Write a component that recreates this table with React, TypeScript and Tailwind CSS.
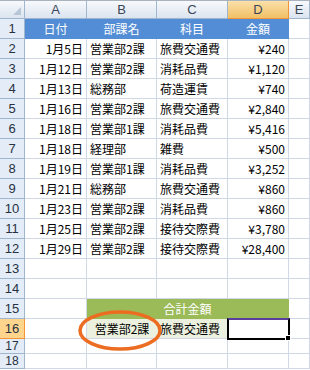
import React from 'react';

type Row = [string, string, string, string];

const rows: Row[] = [
  ['1月5日', '営業部2課', '旅費交通費', '¥240'],
  ['1月12日', '営業部2課', '消耗品費', '¥1,120'],
  ['1月13日', '総務部', '荷造運賃', '¥740'],
  ['1月16日', '営業部2課', '旅費交通費', '¥2,840'],
  ['1月18日', '営業部1課', '消耗品費', '¥5,416'],
  ['1月18日', '経理部', '雑費', '¥500'],
  ['1月19日', '営業部1課', '消耗品費', '¥3,252'],
  ['1月21日', '総務部', '旅費交通費', '¥860'],
  ['1月23日', '営業部2課', '消耗品費', '¥860'],
  ['1月25日', '営業部2課', '接待交際費', '¥3,780'],
  ['1月29日', '営業部2課', '接待交際費', '¥28,400'],
];

const cell = 'border-r border-b border-[#d0d7e5] flex items-end px-[3px] pb-[1px] leading-[16px] whitespace-nowrap overflow-hidden';
const rowHead = "bg-[#e4ecf7] border-r border-b border-[#9eb6ce] flex items-end justify-center pb-[2px] leading-[14px] text-[13px] text-[#27313f] font-['Liberation_Sans',sans-serif]";
const rowHeadSmall = "bg-[#e4ecf7] border-r border-b border-[#9eb6ce] flex items-end justify-center leading-[14px] text-[12px] text-[#27313f] font-['Liberation_Sans',sans-serif]";
const colHead = "bg-gradient-to-b from-[#f7f9fc] to-[#dbe4ef] border-r border-b border-[#9eb6ce] flex items-center justify-center text-[13px] text-[#3b4656] font-['Liberation_Sans',sans-serif]";

const RowHeader: React.FC<{ n: number; active?: boolean; small?: boolean }> = ({ n, active, small }) => {
  if (active) {
    return (
      <div className="bg-[#ffd58d] border-r border-b border-[#f29436] flex items-end justify-center pb-[2px] leading-[14px] text-[13px] text-[#27313f] font-['Liberation_Sans',sans-serif]">
        {n}
      </div>
    );
  }
  return <div className={small ? rowHeadSmall : rowHead}>{n}</div>;
};

const App: React.FC = () => {
  return (
    <div className="w-[310px] h-[370px] overflow-hidden bg-white relative font-['Noto_Sans_CJK_JP',sans-serif] text-[12px] text-black border-t border-[#a9b2bd]">
      <div className="grid grid-cols-[25px_62px_70px_71px_61px_21px] grid-rows-[18px_repeat(16,20px)_15px_15px]">
        {/* column headers */}
        <div className="bg-gradient-to-b from-[#f7f9fc] to-[#dbe4ef] border-r border-b border-[#9eb6ce] relative">
          <div className="absolute right-[3px] bottom-[3px] w-0 h-0 border-l-[8px] border-l-transparent border-b-[8px] border-b-[#b8c6d8]" />
        </div>
        <div className={colHead}>A</div>
        <div className={colHead}>B</div>
        <div className={colHead}>C</div>
        <div className="bg-gradient-to-b from-[#fae0a8] to-[#f2c066] border-r border-b border-[#f29436] flex items-center justify-center text-[13px] text-[#3b4656] font-['Liberation_Sans',sans-serif]">D</div>
        <div className={colHead}>E</div>

        {/* row 1 */}
        <RowHeader n={1} />
        <div className="bg-[#538dd5] border-r border-b border-[#538dd5] flex items-end justify-center pb-[1px] leading-[16px] text-white">日付</div>
        <div className="bg-[#538dd5] border-r border-b border-[#538dd5] flex items-end justify-center pb-[1px] leading-[16px] text-white">部課名</div>
        <div className="bg-[#538dd5] border-r border-b border-[#538dd5] flex items-end justify-center pb-[1px] leading-[16px] text-white">科目</div>
        <div className="bg-[#538dd5] border-r border-b border-[#538dd5] flex items-end justify-center pb-[1px] leading-[16px] text-white">金額</div>
        <div className={cell} />

        {rows.map((r, i) => (
          <React.Fragment key={i}>
            <RowHeader n={i + 2} />
            <div className={`${cell} justify-end`}>{r[0]}</div>
            <div className={cell}>{r[1]}</div>
            <div className={cell}>{r[2]}</div>
            <div className={`${cell} justify-end`}>{r[3]}</div>
            <div className={cell} />
          </React.Fragment>
        ))}

        {[13, 14].map((n) => (
          <React.Fragment key={n}>
            <RowHeader n={n} />
            <div className={cell} />
            <div className={cell} />
            <div className={cell} />
            <div className={cell} />
            <div className={cell} />
          </React.Fragment>
        ))}

        {/* row 15 */}
        <RowHeader n={15} />
        <div className={cell} />
        <div className="col-span-3 bg-[#9bbb59] border-r border-b border-[#9bbb59] flex items-end justify-center pb-[1px] leading-[16px] text-white">合計金額</div>
        <div className={cell} />

        {/* row 16 */}
        <RowHeader n={16} active />
        <div className={cell} />
        <div className="bg-[#ebf1de] border-b border-[#d0d7e5] flex items-end justify-center pb-[1px] leading-[16px]">営業部2課</div>
        <div className="bg-[#ebf1de] border-r border-b border-[#d0d7e5] flex items-end px-[3px] pb-[1px] leading-[16px] whitespace-nowrap">旅費交通費</div>
        <div className="relative border-r border-b border-[#d0d7e5]">
          <div className="absolute -left-[1px] -top-[1px] w-[63px] h-[22px] border-2 border-black border-t-[#5a3f9c]" />
          <div className="absolute -right-[3px] -bottom-[3px] w-[6px] h-[6px] bg-black border border-white" />
        </div>
        <div className={cell} />

        {[17, 18].map((n) => (
          <React.Fragment key={n}>
            <RowHeader n={n} small />
            <div className={cell} />
            <div className={cell} />
            <div className={cell} />
            <div className={cell} />
            <div className={cell} />
          </React.Fragment>
        ))}
      </div>

      <svg className="absolute left-0 top-0 pointer-events-none" width="310" height="370" viewBox="0 0 310 370">
        <ellipse cx="120" cy="329.5" rx="40" ry="18.5" fill="none" stroke="#ec6d21" strokeWidth="3.5" />
      </svg>
    </div>
  );
};

export default App;
